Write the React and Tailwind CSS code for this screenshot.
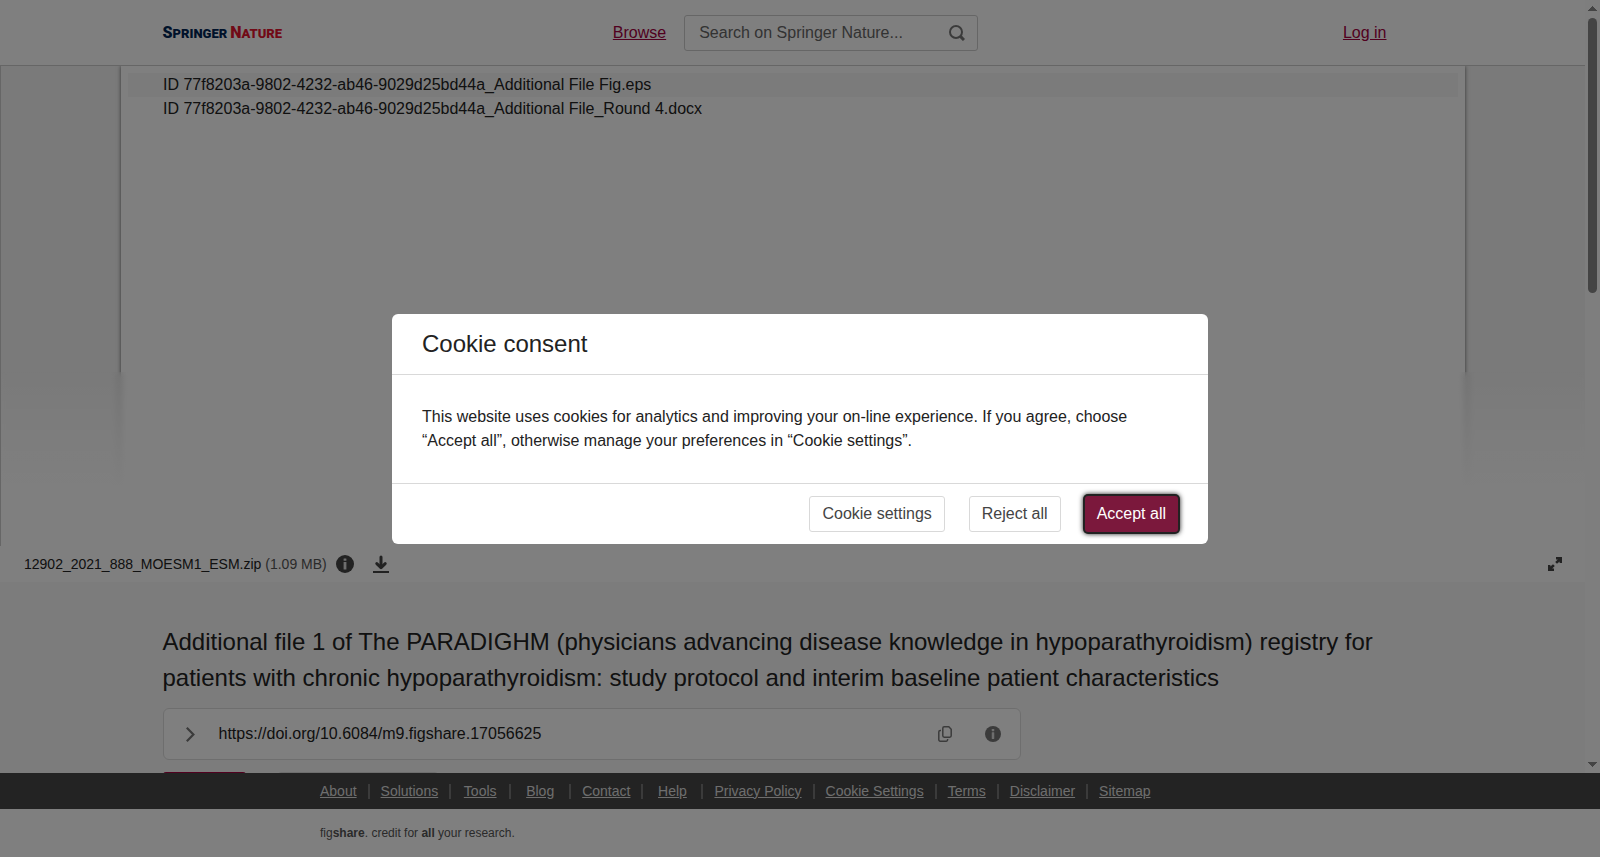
import { useState } from "react";

const FILES = [
  "ID 77f8203a-9802-4232-ab46-9029d25bd44a_Additional File Fig.eps",
  "ID 77f8203a-9802-4232-ab46-9029d25bd44a_Additional File_Round 4.docx"
];

const FOOTER_LINKS = [
  "About",
  "Solutions",
  "Tools",
  "Blog",
  "Contact",
  "Help",
  "Privacy Policy",
  "Cookie Settings",
  "Terms",
  "Disclaimer",
  "Sitemap"
];

const InfoIcon = ({ className }) => (
  <svg viewBox="0 0 18 18" className={className} aria-hidden="true">
    <circle cx="9" cy="9" r="9" fill="currentColor" />
    <rect x="7.6" y="3.4" width="2.8" height="2.4" rx="0.4" fill="#ddd" />
    <rect x="7.6" y="7" width="2.8" height="7.6" rx="0.4" fill="#ddd" />
  </svg>
);

const DownloadIcon = () => (
  <svg viewBox="0 0 16 18" className="h-[18px] w-4" fill="none" stroke="currentColor" aria-hidden="true">
    <path d="M8 2V12" strokeWidth="3" strokeLinecap="round" />
    <path d="M3.8 8.6L8 12.6L12.2 8.6" strokeWidth="3" strokeLinecap="round" strokeLinejoin="round" />
    <path d="M0 17H16" strokeWidth="2" />
  </svg>
);

const ExpandIcon = () => (
  <svg viewBox="0 0 14 14" className="h-3.5 w-3.5" fill="currentColor" aria-hidden="true">
    <path d="M8 0H14V6H11.6V4.4L9 6.8L7.2 5L9.8 2.4H8Z" />
    <path d="M6 14H0V8H2.4V9.6L5 7.2L6.8 9L4.2 11.6H6Z" />
  </svg>
);

const SearchIcon = () => (
  <svg viewBox="0 0 16 16" className="h-4 w-4" fill="none" stroke="currentColor" aria-hidden="true">
    <circle cx="7" cy="7" r="6" strokeWidth="2" />
    <path d="M11.4 11.4L15 15" strokeWidth="3" />
  </svg>
);

const CopyIcon = () => (
  <svg viewBox="0 0 14 16" className="h-4 w-3.5" fill="none" stroke="currentColor" strokeWidth="1.5" aria-hidden="true">
    <path d="M6.2 0.8H10.8L13.2 3.2V9.8A1.4 1.4 0 0 1 11.8 11.2H6.2A1.4 1.4 0 0 1 4.8 9.8V2.2A1.4 1.4 0 0 1 6.2 0.8Z" />
    <path d="M3 4.6H2.2A1.4 1.4 0 0 0 0.8 6V13.8A1.4 1.4 0 0 0 2.2 15.2H8.2A1.4 1.4 0 0 0 9.6 13.8V13" />
  </svg>
);

const ChevronIcon = () => (
  <svg viewBox="0 0 9 15" className="h-[15px] w-[9px]" fill="none" stroke="currentColor" strokeWidth="2.2" aria-hidden="true">
    <path d="M0.8 0.8L7.4 7.5L0.8 14.2" />
  </svg>
);

const Logo = () => (
  <a
    href="#home"
    className="justify-self-start pt-0.5 font-['Roboto',sans-serif] text-[13px] leading-5 font-black whitespace-nowrap"
  >
    <span className="text-[#002454]">
      <span className="text-base leading-5">S</span>PRINGER
    </span>
    <span className="ml-[3px] text-[#e3152f]">
      <span className="text-base leading-5">N</span>ATURE
    </span>
  </a>
);

const Header = () => (
  <header className="h-[66px] shrink-0 border-b border-[#ccc] bg-white">
    <div className="mx-auto grid h-full max-w-[1344px] grid-cols-[1fr_auto_1fr] items-center px-[42px]">
      <Logo />
      <div className="flex items-center gap-[18px] pl-1.5">
        <a href="#browse" className="text-[#a3003f] underline">
          Browse
        </a>
        <form className="flex h-9 w-[294px] items-center rounded-[3px] border border-[#ccc] pr-3 pl-3.5">
          <input
            type="search"
            aria-label="Search on Springer Nature"
            placeholder="Search on Springer Nature..."
            className="min-w-0 flex-1 outline-none placeholder:text-[#666]"
          />
          <button type="button" aria-label="Search" className="text-[#777]">
            <SearchIcon />
          </button>
        </form>
      </div>
      <a href="#login" className="mr-9 justify-self-end text-[#a3003f] underline">
        Log in
      </a>
    </div>
  </header>
);

const FileViewer = () => (
  <section>
    <div className="relative h-[480px] overflow-hidden border-l border-[#ccc] bg-[#f4f4f4]">
      <ul className="mx-auto h-full max-w-[1344px] bg-white px-[7px] pt-[7px] shadow-[0_0_4px_rgba(0,0,0,0.6)]">
        {FILES.map((file, index) => (
          <li key={file} className={index === 0 ? "bg-[#f7f7f7] px-[35px]" : "px-[35px]"}>
            {file}
          </li>
        ))}
      </ul>
      <div className="absolute inset-x-0 bottom-0 h-[174px] bg-linear-to-b from-white/5 to-white to-70% backdrop-blur-[3px]" />
    </div>
    <div className="flex h-9 items-center bg-white pr-[23px] pl-6 text-sm">
      <p className="text-[#222]">
        12902_2021_888_MOESM1_ESM.zip <span className="text-[#555]">(1.09 MB)</span>
      </p>
      <button type="button" aria-label="File details" className="ml-[9px] text-[#444]">
        <InfoIcon className="h-[18px] w-[18px]" />
      </button>
      <button type="button" aria-label="Download file" className="ml-[19px] text-[#444]">
        <DownloadIcon />
      </button>
      <button type="button" aria-label="Enter fullscreen" className="ml-auto text-[#444]">
        <ExpandIcon />
      </button>
    </div>
  </section>
);

const ItemDetails = () => (
  <section className="mx-auto max-w-[1344px] px-[42px] pt-[42px]">
    <h1 className="text-2xl leading-9 text-[#222]">
      Additional file 1 of The PARADIGHM (physicians advancing disease knowledge in hypoparathyroidism) registry for
      patients with chronic hypoparathyroidism: study protocol and interim baseline patient characteristics
    </h1>
    <div className="mt-3 flex h-[52px] max-w-[858px] items-center rounded-md border border-[#ddd] bg-white pr-[19px] pl-[22px]">
      <button type="button" aria-label="Show citation" className="text-[#777]">
        <ChevronIcon />
      </button>
      <span className="ml-6 text-[#222]">https://doi.org/10.6084/m9.figshare.17056625</span>
      <button type="button" aria-label="Copy DOI" className="ml-auto text-[#777]">
        <CopyIcon />
      </button>
      <button type="button" aria-label="About this DOI" className="ml-[33px] text-[#777]">
        <InfoIcon className="h-4 w-4" />
      </button>
    </div>
    <div className="mt-3 flex gap-8">
      <button type="button" aria-label="Cite" className="h-9 w-[83px] rounded-[3px] bg-[#a3003f]" />
      <button
        type="button"
        aria-label="Download all"
        className="h-9 w-[160px] rounded-[3px] border border-[#ddd] bg-white"
      />
    </div>
  </section>
);

const ScrollTrack = () => (
  <div className="flex w-[15px] shrink-0 flex-col items-center bg-[#fdfdfd] py-1.5 text-[#888]" aria-hidden="true">
    <svg viewBox="0 0 9 5" className="h-[5px] w-[9px]" fill="currentColor" shapeRendering="crispEdges">
      <path d="M4 0H5V1H6V2H7V3H8V4H9V5H0V4H1V3H2V2H3V1H4Z" />
    </svg>
    <div className="mt-[7px] h-[275px] w-[9px] rounded-full bg-[#888]" />
    <svg viewBox="0 0 9 5" className="mt-auto h-[5px] w-[9px]" fill="currentColor" shapeRendering="crispEdges">
      <path d="M0 0H9V1H8V2H7V3H6V4H5V5H4V4H3V3H2V2H1V1H0Z" />
    </svg>
  </div>
);

const Footer = () => (
  <footer className="shrink-0">
    <nav className="flex h-9 items-center bg-[#474747]">
      <div className="mx-auto w-full max-w-[960px]">
        <ul className="-ml-[11px] flex text-sm leading-[15px] text-[#ddd]">
          {FOOTER_LINKS.map((label) => (
            <li
              key={label}
              className="min-w-[60px] border-r-2 border-[#777] px-[11px] text-center whitespace-nowrap last:border-r-0"
            >
              <a href="#footer" className="underline">
                {label}
              </a>
            </li>
          ))}
        </ul>
      </div>
    </nav>
    <div className="flex h-12 items-center bg-white">
      <p className="mx-auto w-full max-w-[960px] text-xs text-[#555]">
        fig<strong>share</strong>. credit for <strong>all</strong> your research.
      </p>
    </div>
  </footer>
);

const CookieConsent = ({ onClose }) => (
  <div className="fixed inset-0 flex items-center justify-center bg-black/50">
    <div role="dialog" aria-labelledby="cookie-title" className="w-full max-w-[816px] rounded-md bg-white text-[#222]">
      <h2 id="cookie-title" className="border-b border-[#d9d9d9] px-[30px] py-3 text-2xl leading-9">
        Cookie consent
      </h2>
      <p className="border-b border-[#d9d9d9] px-[30px] py-[30px]">
        This website uses cookies for analytics and improving your on-line experience. If you agree, choose “Accept
        all”, otherwise manage your preferences in “Cookie settings”.
      </p>
      <div className="flex justify-end gap-6 px-[30px] py-3 text-[#444]">
        <button type="button" className="h-9 rounded-[3px] border border-[#d9d9d9] px-3">
          Cookie settings
        </button>
        <button type="button" onClick={onClose} className="h-9 rounded-[3px] border border-[#d9d9d9] px-3">
          Reject all
        </button>
        <button
          type="button"
          onClick={onClose}
          className="h-9 rounded-[3px] bg-[#7b183c] px-3 text-white shadow-[0_0_0_2px_#222,0_0_5px_2px_#222]"
        >
          Accept all
        </button>
      </div>
    </div>
  </div>
);

export default function App() {
  const [showConsent, setShowConsent] = useState(true);

  return (
    <div className="flex h-screen flex-col font-['Liberation_Sans',Arial,sans-serif] text-base text-[#222]">
      <div className="flex min-h-0 flex-1">
        <main className="flex min-w-0 flex-1 flex-col overflow-hidden bg-[#f9f9f9]">
          <Header />
          <FileViewer />
          <ItemDetails />
        </main>
        <ScrollTrack />
      </div>
      <Footer />
      {showConsent ? <CookieConsent onClose={() => setShowConsent(false)} /> : null}
    </div>
  );
}
